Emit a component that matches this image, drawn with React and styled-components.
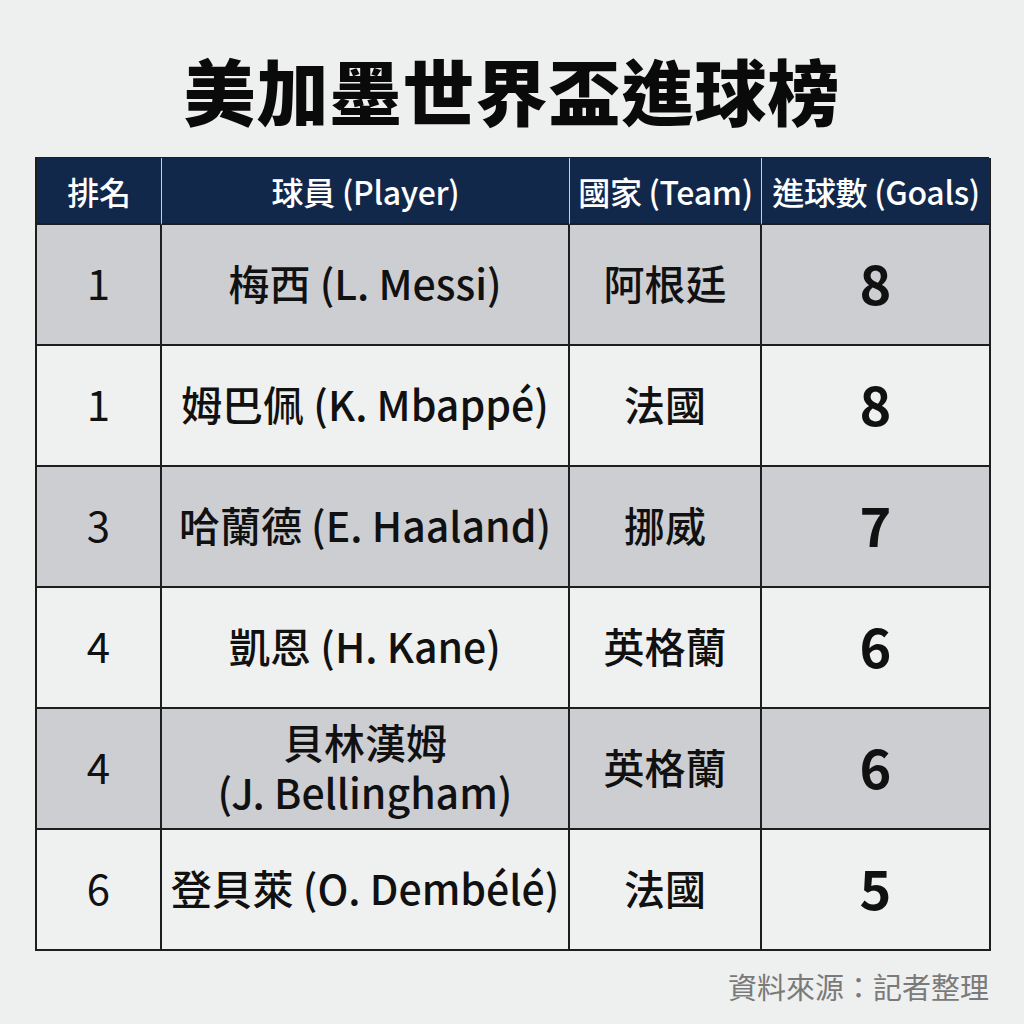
import styled, {createGlobalStyle} from "styled-components";

const GlobalStyle = createGlobalStyle`
  html, body {
    margin: 0;
    padding: 0;
    background: #eeefef;
  }
  * {
    box-sizing: border-box;
  }
`;

const Page = styled.div`
  width: 1024px;
  height: 1024px;
  background: #eeefef;
  font-family: "Noto Sans CJK TC", "Noto Sans", sans-serif;
  color: #111;
  padding: 44px 35px 0 35px;
`;

const Title = styled.h1`
  margin: 0;
  text-align: center;
  font-size: 72px;
  line-height: 90px;
  font-weight: 900;
  color: #0a0a0a;
  letter-spacing: 1px;
`;

const Table = styled.div`
  margin-top: 23px;
  display: grid;
  grid-template-columns: 125px 408px 192px 229px;
  border-left: 2px solid #1e1e1e;
  border-top: 1px solid #1e1e1e;
`;

const HeadCell = styled.div`
  height: 67px;
  background: #12284b;
  color: #fff;
  font-size: 32px;
  font-weight: 500;
  display: flex;
  align-items: center;
  justify-content: center;
  border-right: 1px solid ${(p) => (p.$last ? "#1e1e1e" : "#c9ced8")};
  border-bottom: 2px solid #1e1e1e;
  white-space: nowrap;
  letter-spacing: -0.3px;
`;

const Cell = styled.div`
  height: 121px;
  background: ${(p) => (p.$shaded ? "#cdced2" : "#eff0f0")};
  display: flex;
  align-items: center;
  justify-content: center;
  text-align: center;
  border-right: 2px solid #1e1e1e;
  border-bottom: 2px solid #1e1e1e;
  font-size: ${(p) => p.$size || 41}px;
  font-weight: ${(p) => p.$weight || 500};
  line-height: 1.2;
  padding-bottom: 4px;
  white-space: nowrap;
`;

const Source = styled.div`
  margin-top: 13px;
  text-align: right;
  font-size: 29px;
  line-height: 44px;
  color: #7a7a7a;
`;

const headers = ["排名", "球員 (Player)", "國家 (Team)", "進球數 (Goals)"];

const rows = [
    {rank: "1", player: ["梅西 (L. Messi)"], team: "阿根廷", goals: "8"},
    {rank: "1", player: ["姆巴佩 (K. Mbappé)"], team: "法國", goals: "8"},
    {rank: "3", player: ["哈蘭德 (E. Haaland)"], team: "挪威", goals: "7"},
    {rank: "4", player: ["凱恩 (H. Kane)"], team: "英格蘭", goals: "6"},
    {rank: "4", player: ["貝林漢姆", "(J. Bellingham)"], team: "英格蘭", goals: "6"},
    {rank: "6", player: ["登貝萊 (O. Dembélé)"], team: "法國", goals: "5"},
];

const App = () => {
    return (
        <Page>
            <GlobalStyle/>
            <Title>美加墨世界盃進球榜</Title>
            <Table>
                {headers.map((h, i) => (
                    <HeadCell key={h} $last={i === headers.length - 1}>{h}</HeadCell>
                ))}
                {rows.map((r, i) => {
                    const shaded = i % 2 === 0;
                    return [
                        <Cell key={`r${i}`} $shaded={shaded} $size={42} $weight={400}>{r.rank}</Cell>,
                        <Cell key={`p${i}`} $shaded={shaded}>
                            <div>
                                {r.player.map((line) => <div key={line}>{line}</div>)}
                            </div>
                        </Cell>,
                        <Cell key={`t${i}`} $shaded={shaded}>{r.team}</Cell>,
                        <Cell key={`g${i}`} $shaded={shaded} $size={54} $weight={700}>{r.goals}</Cell>,
                    ];
                })}
            </Table>
            <Source>資料來源：記者整理</Source>
        </Page>
    );
};

export default App;
